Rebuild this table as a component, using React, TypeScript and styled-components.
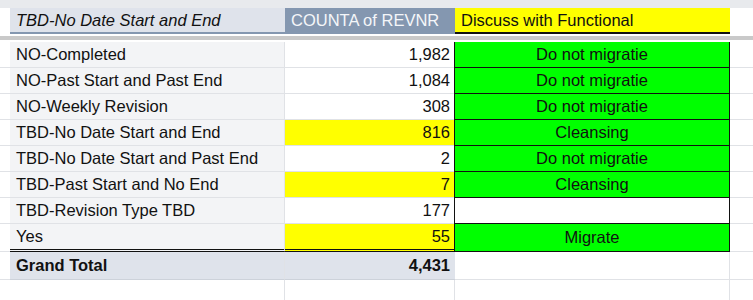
import React from 'react';
import styled, { createGlobalStyle } from 'styled-components';

const GlobalStyle = createGlobalStyle`
  html, body {
    margin: 0;
    padding: 0;
    background: #fff;
  }
  body {
    font-family: 'Liberation Sans', Arial, sans-serif;
    font-size: 16.5px;
    color: #111;
  }
`;

const GRID = '#e0e2e6';

const Sheet = styled.div`
  display: grid;
  grid-template-columns: 10px 275px 170px 275px 23px;
  width: 753px;
  height: 300px;
  overflow: hidden;
  align-content: start;
`;

const Strip = styled.div`
  grid-column: 1 / -1;
  height: 8px;
  background: #e8eaed;
`;

const Band = styled.div`
  grid-column: 1 / -1;
  height: 8px;
  box-sizing: border-box;
  border-top: 2px solid #fff;
  border-bottom: 2px solid #fff;
  background: #c9c9c9;
`;

const Spacer = styled.div<{ $h: number; $line?: boolean }>`
  height: ${p => p.$h}px;
  box-sizing: border-box;
  background: #fff;
  border-bottom: ${p => (p.$line ? `1px solid ${GRID}` : 'none')};
`;

type HeadTone = 'label' | 'count' | 'note';

const HeadCell = styled.div<{ $tone: HeadTone }>`
  height: 26px;
  box-sizing: border-box;
  display: flex;
  align-items: center;
  padding: 0 6px;
  white-space: nowrap;
  background: ${p =>
    p.$tone === 'label' ? '#dfe3eb' : p.$tone === 'count' ? '#8497b0' : '#ffff00'};
  color: ${p => (p.$tone === 'count' ? '#f4f6f9' : '#111')};
  font-style: ${p => (p.$tone === 'label' ? 'italic' : 'normal')};
  border-bottom: 2px solid ${p => (p.$tone === 'note' ? '#111' : '#8497b0')};
`;

const LabelCell = styled.div<{ $h: number; $double?: boolean }>`
  height: ${p => p.$h}px;
  box-sizing: border-box;
  display: flex;
  align-items: center;
  padding: 0 6px;
  white-space: nowrap;
  background: #f3f4f6;
  border-right: 1px solid ${GRID};
  border-bottom: ${p => (p.$double ? '3px double #111' : `1px solid ${GRID}`)};
`;

const CountCell = styled.div<{ $h: number; $hl?: boolean; $double?: boolean }>`
  height: ${p => p.$h}px;
  box-sizing: border-box;
  display: flex;
  align-items: center;
  justify-content: flex-end;
  padding: 0 5px;
  background: ${p => (p.$hl ? '#ffff00' : '#fff')};
  border-bottom: ${p => (p.$double ? '3px double #111' : `1px solid ${GRID}`)};
`;

const NoteCell = styled.div<{ $h: number; $fill: boolean }>`
  height: ${p => p.$h}px;
  box-sizing: border-box;
  display: flex;
  align-items: center;
  justify-content: center;
  background: ${p => (p.$fill ? '#00ff00' : '#fff')};
  border-left: 1px solid #111;
  border-right: 1px solid #111;
  border-bottom: 1px solid #111;
  margin-left: -1px;
`;

const TotalLabel = styled.div`
  height: 28px;
  box-sizing: border-box;
  display: flex;
  align-items: center;
  padding: 0 6px;
  font-weight: bold;
  background: #dfe3eb;
  border-right: 1px solid ${GRID};
  border-bottom: 1px solid #cdd2da;
`;

const TotalCount = styled(TotalLabel)`
  justify-content: flex-end;
  padding: 0 5px;
  border-right: none;
`;

const BlankCell = styled.div<{ $h: number; $right?: boolean }>`
  height: ${p => p.$h}px;
  box-sizing: border-box;
  background: #fff;
  border-bottom: 1px solid ${GRID};
  border-right: ${p => (p.$right ? `1px solid ${GRID}` : 'none')};
`;

interface Row {
  label: string;
  count: string;
  highlight?: boolean;
  note: string;
}

const rows: Row[] = [
  { label: 'NO-Completed', count: '1,982', note: 'Do not migratie' },
  { label: 'NO-Past Start and Past End', count: '1,084', note: 'Do not migratie' },
  { label: 'NO-Weekly Revision', count: '308', note: 'Do not migratie' },
  { label: 'TBD-No Date Start and End', count: '816', highlight: true, note: 'Cleansing' },
  { label: 'TBD-No Date Start and Past End', count: '2', note: 'Do not migratie' },
  { label: 'TBD-Past Start and No End', count: '7', highlight: true, note: 'Cleansing' },
  { label: 'TBD-Revision Type TBD', count: '177', note: '' },
  { label: 'Yes', count: '55', highlight: true, note: 'Migrate' },
];

export default function App() {
  return (
    <>
      <GlobalStyle />
      <Sheet>
        <Strip />
        <Spacer $h={26} />
        <HeadCell $tone="label">TBD-No Date Start and End</HeadCell>
        <HeadCell $tone="count">COUNTA of REVNR</HeadCell>
        <HeadCell $tone="note">Discuss with Functional</HeadCell>
        <Spacer $h={26} />
        <Band />
        {rows.map((r, i) => {
          const last = i === rows.length - 1;
          const h = last ? 28 : 26;
          return (
            <React.Fragment key={r.label}>
              <Spacer $h={h} $line />
              <LabelCell $h={h} $double={last}>{r.label}</LabelCell>
              <CountCell $h={h} $hl={r.highlight} $double={last}>{r.count}</CountCell>
              <NoteCell $h={h} $fill={r.note !== ''}>{r.note}</NoteCell>
              <Spacer $h={h} $line />
            </React.Fragment>
          );
        })}
        <Spacer $h={28} $line />
        <TotalLabel>Grand Total</TotalLabel>
        <TotalCount>4,431</TotalCount>
        <BlankCell $h={28} $right />
        <BlankCell $h={28} />
        <Spacer $h={26} $line />
        <BlankCell $h={26} $right />
        <BlankCell $h={26} $right />
        <BlankCell $h={26} $right />
        <BlankCell $h={26} />
      </Sheet>
    </>
  );
}
